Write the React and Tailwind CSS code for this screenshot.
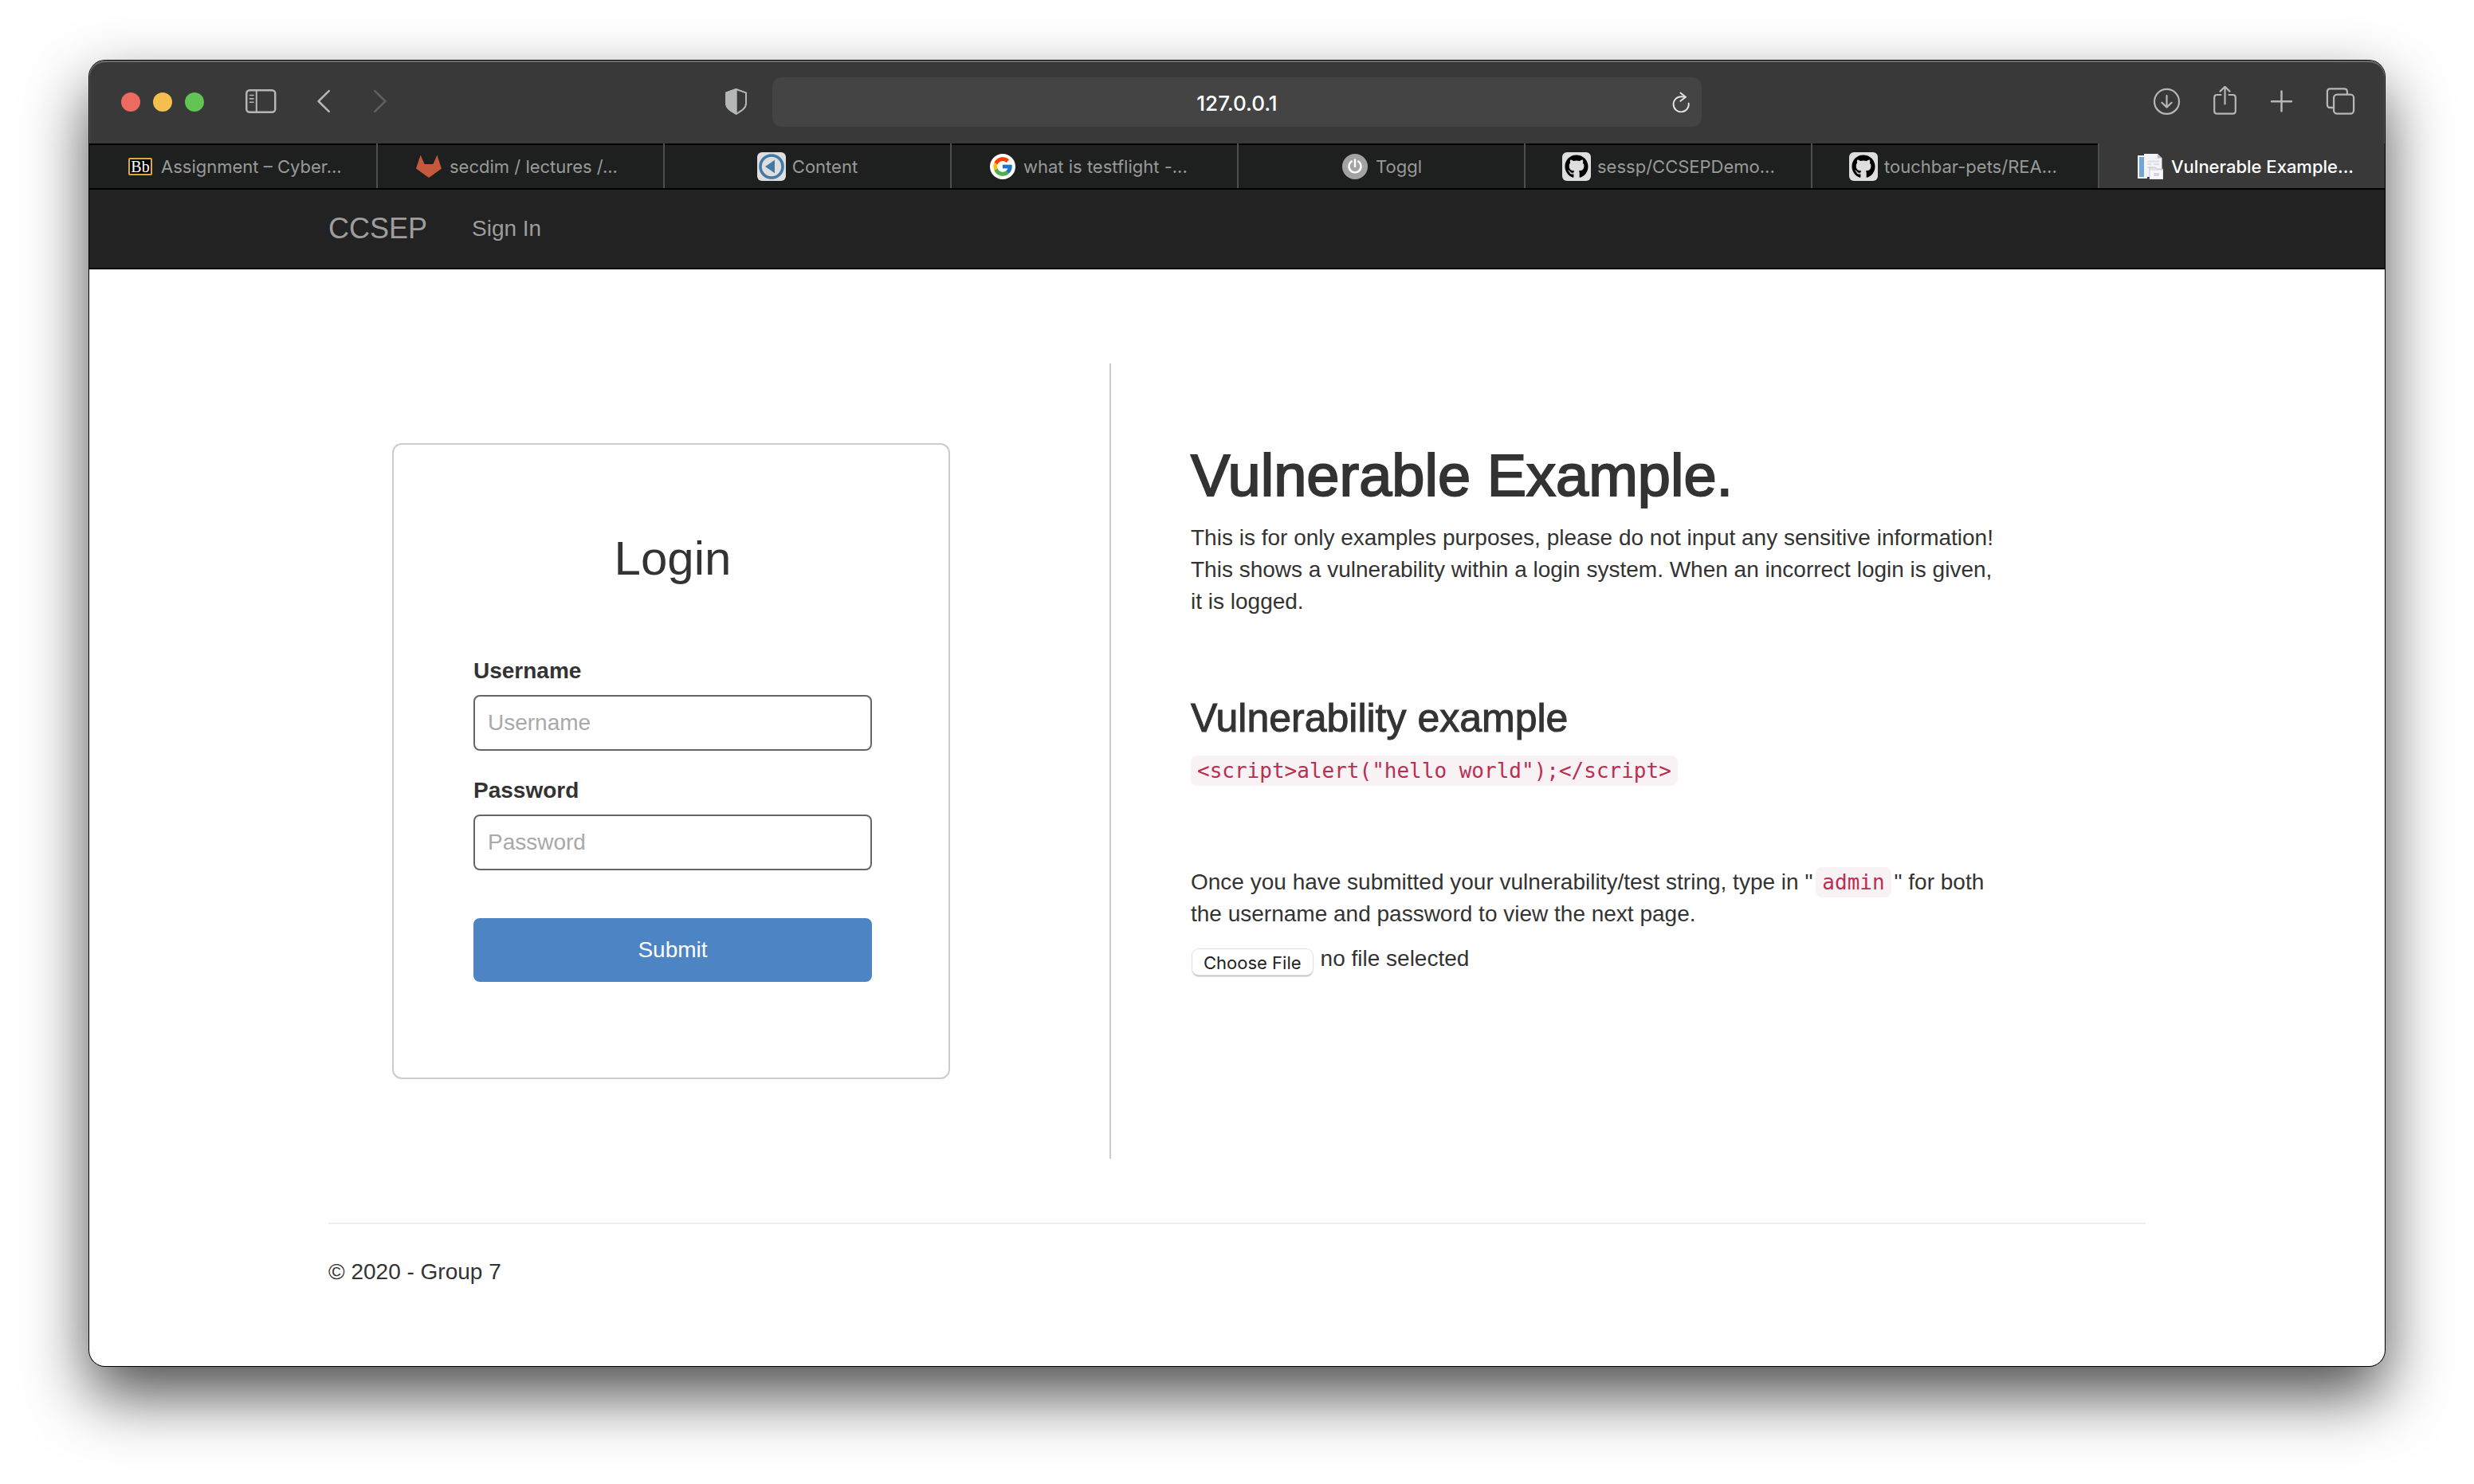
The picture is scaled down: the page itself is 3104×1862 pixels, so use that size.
import React from "react";
import { FaGithub } from "react-icons/fa";
import { FcGoogle } from "react-icons/fc";

const stroke = {
  fill: "none",
  stroke: "currentColor",
  strokeWidth: 2.5,
  strokeLinecap: "round",
  strokeLinejoin: "round",
};

function SidebarIcon() {
  return (
    <svg width="40" height="40" viewBox="0 0 40 40" {...stroke}>
      <rect x="1.25" y="5.25" width="36" height="27.5" rx="4" />
      <path d="M13.8 5.5V32.5" strokeWidth="2" />
      <path d="M5.5 11.5H10M5.5 15.9H10M5.5 20.3H10" strokeWidth="1.6" />
    </svg>
  );
}

function ShieldIcon() {
  return (
    <svg width="28" height="40" viewBox="0 0 28 40" {...stroke} strokeWidth="2">
      <path d="M13.7 4L26 8.4V21.5C26 27.5 21.5 30.6 13.7 34.8C6 30.6 1.2 27.5 1.2 21.5V8.4Z" />
      <path d="M13.7 4V34.8C6 30.6 1.2 27.5 1.2 21.5V8.4Z" fill="currentColor" />
    </svg>
  );
}

function ReloadIcon() {
  return (
    <svg width="24" height="40" viewBox="0 0 24 40" {...stroke} strokeWidth="1.9">
      <path d="M21.7 21.6A9.6 9.6 0 1 1 12.3 13.2C14 13.2 16 13.3 17.8 13.8" />
      <path d="M11.4 8.6L17.9 13.8L11.4 18.8" />
    </svg>
  );
}

function DownloadIcon() {
  return (
    <svg width="40" height="40" viewBox="0 0 40 40" {...stroke} strokeWidth="2.2">
      <circle cx="18.5" cy="19.4" r="15.5" />
      <path d="M18.5 12V26.2M12.4 20.8L18.5 26.6L24.6 20.8" />
    </svg>
  );
}

function ShareIcon() {
  return (
    <svg width="40" height="40" viewBox="0 0 40 40" {...stroke} strokeWidth="2.2">
      <path d="M14.5 11H9.5Q6.2 11 6.2 14.3V31.3Q6.2 34.6 9.5 34.6H29.5Q32.8 34.6 32.8 31.3V14.3Q32.8 11 29.5 11H24.5" />
      <path d="M19.5 22.5V1M13.5 6.6L19.5 0.8L25.5 6.6" />
    </svg>
  );
}

function PlusIcon() {
  return (
    <svg width="40" height="40" viewBox="0 0 40 40" {...stroke}>
      <path d="M18.5 6.5V31.5M6 19.2H31" />
    </svg>
  );
}

function TabsIcon() {
  return (
    <svg width="40" height="40" viewBox="0 0 40 40" {...stroke} strokeWidth="2.3">
      <rect x="12.1" y="10.6" width="25" height="24" rx="4" />
      <path d="M11.5 27H7.7Q3.9 27 3.9 23.2V7.2Q3.9 3.4 7.7 3.4H25.1Q28.9 3.4 28.9 7.2V10" />
    </svg>
  );
}

function FoxIcon() {
  return (
    <svg width="32" height="30" viewBox="0 0 32 30">
      <path d="M5.6 0.5L10.6 12H21.4L26.4 0.5L32 17.5L16 29L0 17.5Z" fill="#c6583b" />
    </svg>
  );
}

function ContentIcon() {
  return (
    <svg width="36" height="36" viewBox="0 0 36 36">
      <rect width="36" height="36" rx="6" fill="#dedede" />
      <circle cx="18" cy="18" r="14" fill="none" stroke="#437aa5" strokeWidth="3.6" />
      <path d="M10 18L22 9.8V26.2Z" fill="#437aa5" />
    </svg>
  );
}

function PowerIcon() {
  return (
    <svg width="32" height="32" viewBox="0 0 32 32">
      <circle cx="16" cy="16" r="16" fill="#a3a3a3" />
      <g fill="none" stroke="#fff" strokeWidth="2.4">
        <path d="M16 6.5V17" />
        <path d="M12.6 9A7.6 7.6 0 1 0 19.4 9" />
      </g>
    </svg>
  );
}

function DocumentsIcon() {
  return (
    <svg width="32" height="32" viewBox="0 0 32 32">
      <rect x="0" y="2" width="12" height="29" fill="#eef0f3" />
      <rect x="2" y="4" width="7" height="25" fill="#74a5d4" />
      <path d="M8 0H25L30.5 5.5V29H8Z" fill="#f4f4f6" />
      <path d="M25 0V5.5H30.5Z" fill="#b9bbc0" />
      <path d="M12 9.5H27M12 13H17M20 13H27M12 17H15" stroke="#dfe0e6" strokeWidth="2" />
      <path d="M15 17H22L24 19H32V32H15Z" fill="#e3e4e8" stroke="#b4b6ba" strokeWidth="0.8" />
      <rect x="15.5" y="21" width="16" height="10.5" fill="#f7f7f9" />
      <rect x="20" y="24" width="7" height="4" fill="#d4d6dc" />
    </svg>
  );
}

function GithubBadge() {
  return (
    <span className="flex size-9 items-center justify-center rounded-md bg-[#dedede] text-black">
      <FaGithub size={30} />
    </span>
  );
}

function GoogleBadge() {
  return (
    <span className="flex size-8 items-center justify-center rounded-full bg-white">
      <FcGoogle size={28} />
    </span>
  );
}

function BbBadge() {
  return (
    <span className="flex h-[22px] w-[30px] items-center justify-center rounded-xs border-2 border-[#dba93a] bg-black font-['Liberation_Serif',serif] text-[20px] leading-none text-white">
      Bb
    </span>
  );
}

const tabs = [
  { label: "Assignment – Cyber...", icon: <BbBadge />, long: true },
  { label: "secdim / lectures /...", icon: <FoxIcon />, long: true },
  { label: "Content", icon: <ContentIcon /> },
  { label: "what is testflight -...", icon: <GoogleBadge />, long: true },
  { label: "Toggl", icon: <PowerIcon /> },
  { label: "sessp/CCSEPDemo...", icon: <GithubBadge />, long: true },
  { label: "touchbar-pets/REA...", icon: <GithubBadge />, long: true },
  { label: "Vulnerable Example...", icon: <DocumentsIcon />, long: true, active: true },
];

function Tab({ tab, first }) {
  return (
    <button
      type="button"
      className={
        "flex min-w-0 " +
        (first ? "" : "border-l-2 border-[#4c4e4d] ") +
        (tab.active ? "font-medium text-white" : "text-[#989a99]")
      }
    >
      <span
        className={
          "flex h-full w-full items-center justify-center gap-2 border-t-2 px-[46px] " +
          (tab.active ? "border-[#383938] bg-[#383938]" : "border-black bg-[#1e201f]")
        }
      >
        <span className="flex w-9 flex-none justify-center">{tab.icon}</span>
        <span className={"text-left whitespace-nowrap " + (tab.long ? "min-w-0 flex-1" : "")}>
          {tab.label}
        </span>
      </span>
    </button>
  );
}

function Toolbar() {
  return (
    <header className="grid h-[104px] grid-cols-[857fr_1166fr_857fr] items-center rounded-t-[20px] bg-[#383938] text-[#b5b7b6] shadow-[inset_0_2px_0_#6b6d6b,inset_1px_0_0_#5b5d5b,inset_-1px_0_0_#5b5d5b]">
      <div className="flex items-center pl-10">
        <div className="flex gap-4">
          <button type="button" aria-label="Close" className="size-6 rounded-full bg-[#ed6a5e]" />
          <button type="button" aria-label="Minimize" className="size-6 rounded-full bg-[#f5bf4f]" />
          <button type="button" aria-label="Zoom" className="size-6 rounded-full bg-[#61c554]" />
        </div>
        <button type="button" aria-label="Sidebar" className="ml-[52px]">
          <SidebarIcon />
        </button>
        <button type="button" aria-label="Back" className="ml-[50px]">
          <svg width="16" height="40" viewBox="0 0 16 40" {...stroke}>
            <path d="M14.7 6.2L1.6 19L14.7 31.8" />
          </svg>
        </button>
        <button type="button" aria-label="Forward" className="ml-[55px] text-[#5f615f]">
          <svg width="16" height="40" viewBox="0 0 16 40" {...stroke}>
            <path d="M1.3 6.2L14.4 19L1.3 31.8" />
          </svg>
        </button>
        <button type="button" aria-label="Privacy report" className="mr-[31px] ml-auto">
          <ShieldIcon />
        </button>
      </div>
      <div className="flex h-[62px] items-center rounded-xl bg-[#434443] px-[14px]">
        <input
          type="text"
          aria-label="Address"
          defaultValue="127.0.0.1"
          className="min-w-0 flex-1 bg-transparent pt-1 pl-6 text-center text-[26px] font-medium text-white outline-none"
        />
        <button type="button" aria-label="Reload" className="text-[#e2e3e2]">
          <ReloadIcon />
        </button>
      </div>
      <div className="flex items-center justify-end gap-8 pr-9">
        <button type="button" aria-label="Downloads"><DownloadIcon /></button>
        <button type="button" aria-label="Share"><ShareIcon /></button>
        <button type="button" aria-label="New tab"><PlusIcon /></button>
        <button type="button" aria-label="Show all tabs"><TabsIcon /></button>
      </div>
    </header>
  );
}

function Field({ id, label, type }) {
  return (
    <div className="mb-[30px]">
      <label htmlFor={id} className="mb-[10px] block font-bold">
        {label}
      </label>
      <input
        id={id}
        type={type}
        placeholder={label}
        className="block h-[70px] w-full rounded-lg border-2 border-[#666] px-4 outline-none placeholder:text-[#a9a9a9]"
      />
    </div>
  );
}

function LoginCard() {
  return (
    <form
      onSubmit={(e) => e.preventDefault()}
      className="my-[100px] ml-20 w-[700px] rounded-xl border-2 border-[#ccc] pt-[110px] pr-24 pb-[120px] pl-[100px]"
    >
      <h2 className="mb-[88px] text-center text-[60px] leading-[66px]">Login</h2>
      <Field id="username" label="Username" type="text" />
      <Field id="password" label="Password" type="password" />
      <button type="submit" className="mt-[30px] h-20 w-full rounded-lg bg-[#4d84c4] text-white">
        Submit
      </button>
    </form>
  );
}

function Code({ children }) {
  return (
    <code className="rounded-lg bg-[#f8f2f5] px-2 py-1 font-['DejaVu_Sans_Mono',monospace] text-[26px] text-[#ba2f50]">
      {children}
    </code>
  );
}

function Intro() {
  return (
    <section className="border-l-2 border-[#ccc] pt-[100px] pl-[100px]">
      <h1 className="text-[74px] leading-[82px] [-webkit-text-stroke:2px_#333]">Vulnerable Example.</h1>
      <p className="mt-[17px] max-w-[1020px]">
        This is for only examples purposes, please do not input any sensitive information! This shows a
        vulnerability within a login system. When an incorrect login is given, it is logged.
      </p>
      <h3 className="mt-[99px] text-[50px] leading-[54px] [-webkit-text-stroke:1px_#333]">
        Vulnerability example
      </h3>
      <p className="mt-[19px]">
        <Code>{'<script>alert("hello world");</script>'}</Code>
      </p>
      <p className="mt-[100px] max-w-[1020px]">
        Once you have submitted your vulnerability/test string, type in "
        <span className="mx-1">
          <Code>admin</Code>
        </span>
        " for both the username and password to view the next page.
      </p>
      <div className="mt-4 flex h-10 items-end gap-[10px]">
        <label
          htmlFor="upload"
          className="ml-0.5 h-8 rounded-lg bg-white px-[14px] font-['Inter',sans-serif] text-[22px] leading-[34px] text-[#222] shadow-[0_0_0_1px_#e2e2e2,0_2px_2px_#aaa]"
        >
          Choose File
        </label>
        <input id="upload" type="file" className="sr-only" />
        <span>no file selected</span>
      </div>
    </section>
  );
}

export default function App() {
  return (
    <div className="flex min-h-screen flex-col overflow-hidden bg-white px-28 pt-[76px] pb-[148px]">
      <div className="flex flex-1 flex-col overflow-hidden rounded-[20px] bg-white font-['Liberation_Sans',Arial,sans-serif] text-[28px] leading-10 text-[#333] shadow-[0_0_0_1px_#000,0_36px_80px_rgba(0,0,0,0.7)]">
        <div className="bg-[#383938] font-['Inter',sans-serif]">
          <Toolbar />
          <nav aria-label="Tabs" className="grid h-[58px] grid-cols-8 border-b-2 border-black text-[22px]">
            {tabs.map((tab, i) => (
              <Tab key={tab.label} tab={tab} first={i === 0} />
            ))}
          </nav>
        </div>
        <nav aria-label="Site" className="border-b-2 border-[#080808] bg-[#222] text-[#9d9d9d]">
          <div className="mx-auto flex h-[98px] w-full max-w-[2280px] items-center">
            <a href="#" className="w-[180px] text-[36px]">CCSEP</a>
            <a href="#">Sign In</a>
          </div>
        </nav>
        <div className="mx-auto w-full max-w-[2280px] pt-[118px]">
          <main className="grid grid-cols-[49fr_65fr]">
            <LoginCard />
            <Intro />
          </main>
          <footer className="mt-20 border-t-2 border-[#eee] pt-10">© 2020 - Group 7</footer>
        </div>
      </div>
    </div>
  );
}
